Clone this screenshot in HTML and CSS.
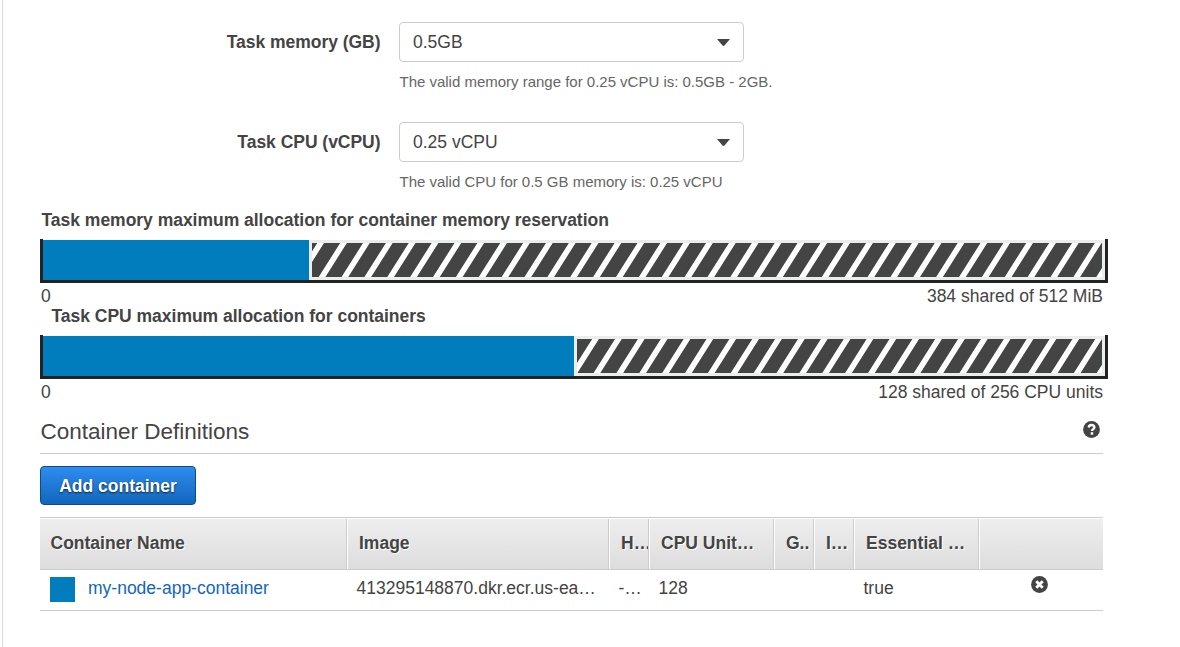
FILE: index.html
```html
<!DOCTYPE html>
<html lang="en">
<head>
<meta charset="utf-8">
<title>Task definition</title>
<link rel="stylesheet" href="styles.css">
</head>
<body>
<main class="panel">
  <div class="field">
    <label class="field-label">Task memory (GB)</label>
    <div class="field-control">
      <div class="select"><span>0.5GB</span><svg class="caret" viewBox="0 0 13 8"><path d="M0 0h13L7.5 6.6q-1 .9-2 0z"/></svg></div>
      <p class="hint">The valid memory range for 0.25 vCPU is: 0.5GB - 2GB.</p>
    </div>
  </div>
  <div class="field">
    <label class="field-label">Task CPU (vCPU)</label>
    <div class="field-control">
      <div class="select"><span>0.25 vCPU</span><svg class="caret" viewBox="0 0 13 8"><path d="M0 0h13L7.5 6.6q-1 .9-2 0z"/></svg></div>
      <p class="hint">The valid CPU for 0.5 GB memory is: 0.25 vCPU</p>
    </div>
  </div>

  <section class="allocation">
    <h3 class="allocation-title">Task memory maximum allocation for container memory reservation</h3>
    <div class="bar">
      <div class="bar-used memory-used"></div>
      <svg class="bar-shared"><path class="stripes" d="M-17.57 17H860" transform="skewX(-32.3)"/></svg>
    </div>
    <div class="scale"><span>0</span><span>384 shared of 512 MiB</span></div>
  </section>
  <section class="allocation">
    <h3 class="allocation-title inset">Task CPU maximum allocation for containers</h3>
    <div class="bar">
      <div class="bar-used cpu-used"></div>
      <svg class="bar-shared"><path class="stripes" d="M-7.67 17H860" transform="skewX(-32.3)"/></svg>
    </div>
    <div class="scale"><span>0</span><span>128 shared of 256 CPU units</span></div>
  </section>

  <header class="section-head">
    <h2>Container Definitions</h2>
    <svg class="icon help" viewBox="0 0 17 17"><circle cx="8.5" cy="8.5" r="8.4" fill="#444"/><path d="M5.7 6.5C5.9 4.7 7 4 8.5 4c1.7 0 2.9.9 2.9 2.3 0 1.9-2.4 1.8-2.4 3.7" fill="none" stroke="#fff" stroke-width="2.4"/><path d="M7.7 11.2h2.5v2.5H7.7z" fill="#fff"/></svg>
  </header>
  <button class="add-button">Add container</button>

  <div class="table">
    <div class="row head">
      <span>Container Name</span><span>Image</span><span>H…</span><span>CPU Unit…</span><span>G..</span><span>I…</span><span>Essential …</span><span></span>
    </div>
    <div class="row data">
      <span class="name"><i class="swatch"></i><a>my-node-app-container</a></span><span>413295148870.dkr.ecr.us-ea…</span><span>-…</span><span>128</span><span></span><span></span><span>true</span>
      <span class="remove"><svg class="icon" viewBox="0 0 17 17"><circle cx="8.5" cy="8.5" r="8.4" fill="#444"/><path d="M5.3 5.3l6.4 6.4M11.7 5.3l-6.4 6.4" stroke="#fff" stroke-width="2.9"/></svg></span>
    </div>
  </div>
</main>
</body>
</html>
```
FILE: styles.css
```css
* { box-sizing: border-box; }
body {
  margin: 0;
  height: 647px;
  overflow: hidden;
  background: #fff;
  color: #444;
  font: 17.5px/20px "Liberation Sans", Arial, sans-serif;
}
h2, h3, p { margin: 0; }
.panel {
  height: 647px;
  margin-left: 2px;
  padding: 22px 77px 0 37px;
  border-left: 1px solid #ddd;
}
.field { display: flex; gap: 18.5px; height: 100px; }
.field-label { width: 340.5px; padding-top: 10px; text-align: right; font-weight: bold; letter-spacing: -0.03px; }
.select {
  display: flex;
  align-items: center;
  justify-content: space-between;
  width: 345px;
  height: 40px;
  padding: 0 13px;
  border: 1px solid #ccc;
  border-radius: 4px;
}
.caret { width: 13px; height: 8px; margin-top: 2px; fill: #444; }
.hint { padding: 10px 0 0 0.5px; font-size: 15px; letter-spacing: -0.01px; color: #666; }

.allocation { width: 1068px; height: 96px; }
.field + .allocation { margin-top: -12px; }
.allocation-title { height: 29px; padding-left: 1.5px; font-size: 17.5px; line-height: 20px; letter-spacing: -0.02px; }
.allocation-title.inset { padding-left: 11.5px; }
.bar {
  display: flex;
  height: 44px;
  padding-top: 1px;
  border: solid #222;
  border-width: 0 3px 3px;
}
.bar-used { background: #007dbc; }
.memory-used { width: 266px; }
.cpu-used { width: 531px; }
.bar-shared { flex: 1; min-width: 0; height: 40px; border: 3px solid #e9eeed; background: #444; overflow: hidden; }
.stripes { fill: none; stroke: #fff; stroke-width: 34px; stroke-dasharray: 6.7 16.17; }
.scale { display: flex; justify-content: space-between; height: 23px; padding: 3px 5px 0 1px; }

.section-head {
  display: flex;
  align-items: center;
  justify-content: space-between;
  height: 52px;
  padding: 9px 3px 0 0.5px;
  border-bottom: 1px solid #ccc;
}
.section-head h2 { font-size: 22.5px; line-height: 26px; font-weight: normal; }
.icon { display: block; width: 17px; height: 17px; }
.help { margin-top: -6px; }
.add-button {
  display: block;
  width: 156px;
  height: 39px;
  margin: 12px 0;
  padding: 0;
  border: 1px solid #0e4a86;
  border-radius: 4px;
  background: linear-gradient(#2e8df0, #1166bb);
  color: #fff;
  font: bold 17.5px/20px "Liberation Sans", Arial, sans-serif;
  text-shadow: 0 1px 2px #123;
}
.table { border-top: 1px solid #ccc; }
.row { display: grid; grid-template-columns: 307px 262px 40px 125px 40px 40px 125px 124px; border-bottom: 1px solid #ccc; }
.row > span { overflow: hidden; white-space: nowrap; }
.head {
  height: 51px;
  margin-top: 1px;
  background: linear-gradient(#eee, #ddd);
  font-weight: bold;
  text-shadow: 1px 1px 0 #fff;
}
.head > span { padding: 14px 0 0 11px; border-left: 1px solid #fff; border-right: 1px solid #ccc; }
.head > span:first-child { padding-left: 10.5px; border-left: 0; }
.head > span:last-child { border-right: 0; }
.data { height: 41px; }
.data > span { padding: 8px 0 0 9.5px; }
.data .name { display: flex; gap: 13px; padding: 7px 0 0 10px; }
.swatch { width: 25px; height: 25px; background: #007dbc; }
.name a { padding-top: 1px; color: #1166bb; }
.data .remove { padding: 6px 0 0 51.5px; }
```
